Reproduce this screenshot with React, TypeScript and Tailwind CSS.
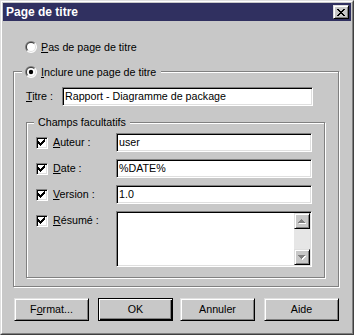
import React from "react";

const sunken =
  "bg-white border border-t-[#808080] border-l-[#808080] border-r-white border-b-white shadow-[inset_1px_1px_0_#000,inset_-1px_-1px_0_#dfdfdf]";
const raised =
  "bg-[#c8c8c8] border border-t-[#dfdfdf] border-l-[#dfdfdf] border-r-black border-b-black shadow-[inset_1px_1px_0_#fff,inset_-1px_-1px_0_#808080]";
const etched = "relative border border-[#808080] shadow-[1px_1px_0_#fff,inset_1px_1px_0_#fff]";

function Radio({ checked }: { checked?: boolean }) {
  return (
    <svg width="12" height="12" viewBox="0 0 12 12" className="shrink-0">
      <path d="M1.757 10.243 A6 6 0 0 1 10.243 1.757 Z" fill="#808080" />
      <path d="M10.243 1.757 A6 6 0 0 1 1.757 10.243 Z" fill="#ffffff" />
      <path d="M2.464 9.536 A5 5 0 0 1 9.536 2.464 Z" fill="#404040" />
      <path d="M9.536 2.464 A5 5 0 0 1 2.464 9.536 Z" fill="#dfdfdf" />
      <circle cx="6" cy="6" r="4" fill="#fff" />
      {checked && <circle cx="6" cy="6" r="2.2" fill="#000" />}
    </svg>
  );
}

const checkPx = [
  [6, 0], [5, 1], [6, 1], [0, 2], [4, 2], [5, 2], [6, 2], [0, 3], [1, 3], [3, 3], [4, 3], [5, 3],
  [0, 4], [1, 4], [2, 4], [3, 4], [4, 4], [1, 5], [2, 5], [3, 5], [2, 6],
];

function Checkbox() {
  return (
    <div className={`w-[12px] h-[12px] shrink-0 ${sunken}`}>
      <svg width="7" height="7" viewBox="0 0 7 7" className="m-px" shapeRendering="crispEdges">
        {checkPx.map(([x, y]) => (
          <rect key={`${x}-${y}`} x={x} y={y} width="1" height="1" fill="#000" />
        ))}
      </svg>
    </div>
  );
}

const xPx = [
  [0, 0], [1, 0], [6, 0], [7, 0], [1, 1], [2, 1], [5, 1], [6, 1], [2, 2], [3, 2], [4, 2], [5, 2],
  [3, 3], [4, 3], [2, 4], [3, 4], [4, 4], [5, 4], [1, 5], [2, 5], [5, 5], [6, 5], [0, 6], [1, 6],
  [6, 6], [7, 6],
];

function CloseButton() {
  return (
    <div className={`w-[16px] h-[14px] flex items-center justify-center ${raised}`}>
      <svg width="8" height="7" viewBox="0 0 8 7" shapeRendering="crispEdges">
        {xPx.map(([x, y]) => (
          <rect key={`${x}-${y}`} x={x} y={y} width="1" height="1" fill="#000" />
        ))}
      </svg>
    </div>
  );
}

function ScrollButton({ up }: { up?: boolean }) {
  return (
    <div className={`w-[16px] h-[16px] flex items-center justify-center ${raised}`}>
      <svg width="8" height="5" viewBox="0 0 8 5" shapeRendering="crispEdges">
        {up ? (
          <>
            <path d="M1 4h7v1H1z M2 3h5v1H2z M3 2h3v1H3z M4 1h1v1H4z" fill="#fff" />
            <path d="M0 3h7v1H0z M1 2h5v1H1z M2 1h3v1H2z M3 0h1v1H3z" fill="#808080" />
          </>
        ) : (
          <>
            <path d="M1 1h7v1H1z M2 2h5v1H2z M3 3h3v1H3z M4 4h1v1H4z" fill="#fff" />
            <path d="M0 0h7v1H0z M1 1h5v1H1z M2 2h3v1H2z M3 3h1v1H3z" fill="#808080" />
          </>
        )}
      </svg>
    </div>
  );
}

function Field({ label, value }: { label: React.ReactNode; value: string }) {
  return (
    <div className="flex items-center h-[19px]">
      <Checkbox />
      <span className="ml-[5px] w-[63px]">{label}</span>
      <div className={`w-[196px] h-[19px] flex items-center pl-[2px] ${sunken}`}>{value}</div>
    </div>
  );
}

function Button({ children, def, className }: { children: React.ReactNode; def?: boolean; className?: string }) {
  const cls = def
    ? "bg-[#c8c8c8] border border-black shadow-[inset_1px_1px_0_#fff,inset_-1px_-1px_0_#000,inset_-2px_-2px_0_#808080]"
    : raised;
  return (
    <div className={`w-[75px] h-[23px] flex items-center justify-center ${cls} ${className ?? ""}`}>
      {children}
    </div>
  );
}

export default function App() {
  return (
    <div className="w-[354px] h-[335px] bg-[#c8c8c8] border border-t-[#dfdfdf] border-l-[#dfdfdf] border-r-[#404040] border-b-[#404040] font-['Liberation_Sans',Arial,sans-serif] text-[10.7px] leading-[13px] text-black">
      <div className="h-full border border-t-white border-l-white border-r-[#808080] border-b-[#808080] p-px">
        {/* Title bar */}
        <div className="h-[18px] bg-[#303060] flex items-center justify-between pl-[3px] pr-[2px]">
          <span className="text-white font-bold text-[12px] leading-[14px]">Page de titre</span>
          <CloseButton />
        </div>

        <div className="pl-[10px]">
          <div className="mt-[20px] ml-[12px] h-[12px] flex items-center gap-[4px]">
            <Radio />
            <span>
              <u>P</u>as de page de titre
            </span>
          </div>

          {/* Inclure group */}
          <div className={`mt-[18px] w-[326px] h-[216px] ${etched}`}>
            <div className="absolute left-[8px] top-[-6px] h-[12px] pl-[3px] pr-[5px] flex items-center gap-[4px] bg-[#c8c8c8]">
              <Radio checked />
              <span>
                <u>I</u>nclure une page de titre
              </span>
            </div>
            <div className="pl-[12px] pt-[15px]">
              <div className="flex items-center h-[19px]">
                <span className="w-[36px]">
                  <u>T</u>itre :
                </span>
                <div className={`w-[251px] h-[19px] flex items-center pl-[2px] ${sunken}`}>
                  Rapport - Diagramme de package
                </div>
              </div>

              {/* Champs facultatifs group */}
              <div className={`mt-[16px] w-[299px] h-[156px] ${etched}`}>
                <div className="absolute left-[7px] top-[-7px] px-[4px] bg-[#c8c8c8]">Champs facultatifs</div>
                <div className="pl-[9px] pt-[10px] flex flex-col gap-[7px]">
                  <Field label={<><u>A</u>uteur :</>} value="user" />
                  <Field label={<><u>D</u>ate :</>} value="%DATE%" />
                  <Field label={<><u>V</u>ersion :</>} value="1.0" />
                  <div className="flex items-start">
                    <div className="flex items-center h-[19px]">
                      <Checkbox />
                      <span className="ml-[5px] w-[63px]">
                        <u>R</u>ésumé :
                      </span>
                    </div>
                    <div className={`w-[196px] h-[56px] flex p-px ${sunken}`}>
                      <div className="flex-1" />
                      <div className="w-[16px] flex flex-col">
                        <ScrollButton up />
                        <div className="flex-1 bg-[#e6e6e6]" />
                        <ScrollButton />
                      </div>
                    </div>
                  </div>
                </div>
              </div>
            </div>
          </div>

          {/* Buttons */}
          <div className="mt-[11px] flex">
            <Button className="ml-px">
              F<u>o</u>rmat...
            </Button>
            <Button def className="ml-[9px]">
              OK
            </Button>
            <Button className="ml-[7px]">Annuler</Button>
            <Button className="ml-[9px]">Aide</Button>
          </div>
        </div>
      </div>
    </div>
  );
}
